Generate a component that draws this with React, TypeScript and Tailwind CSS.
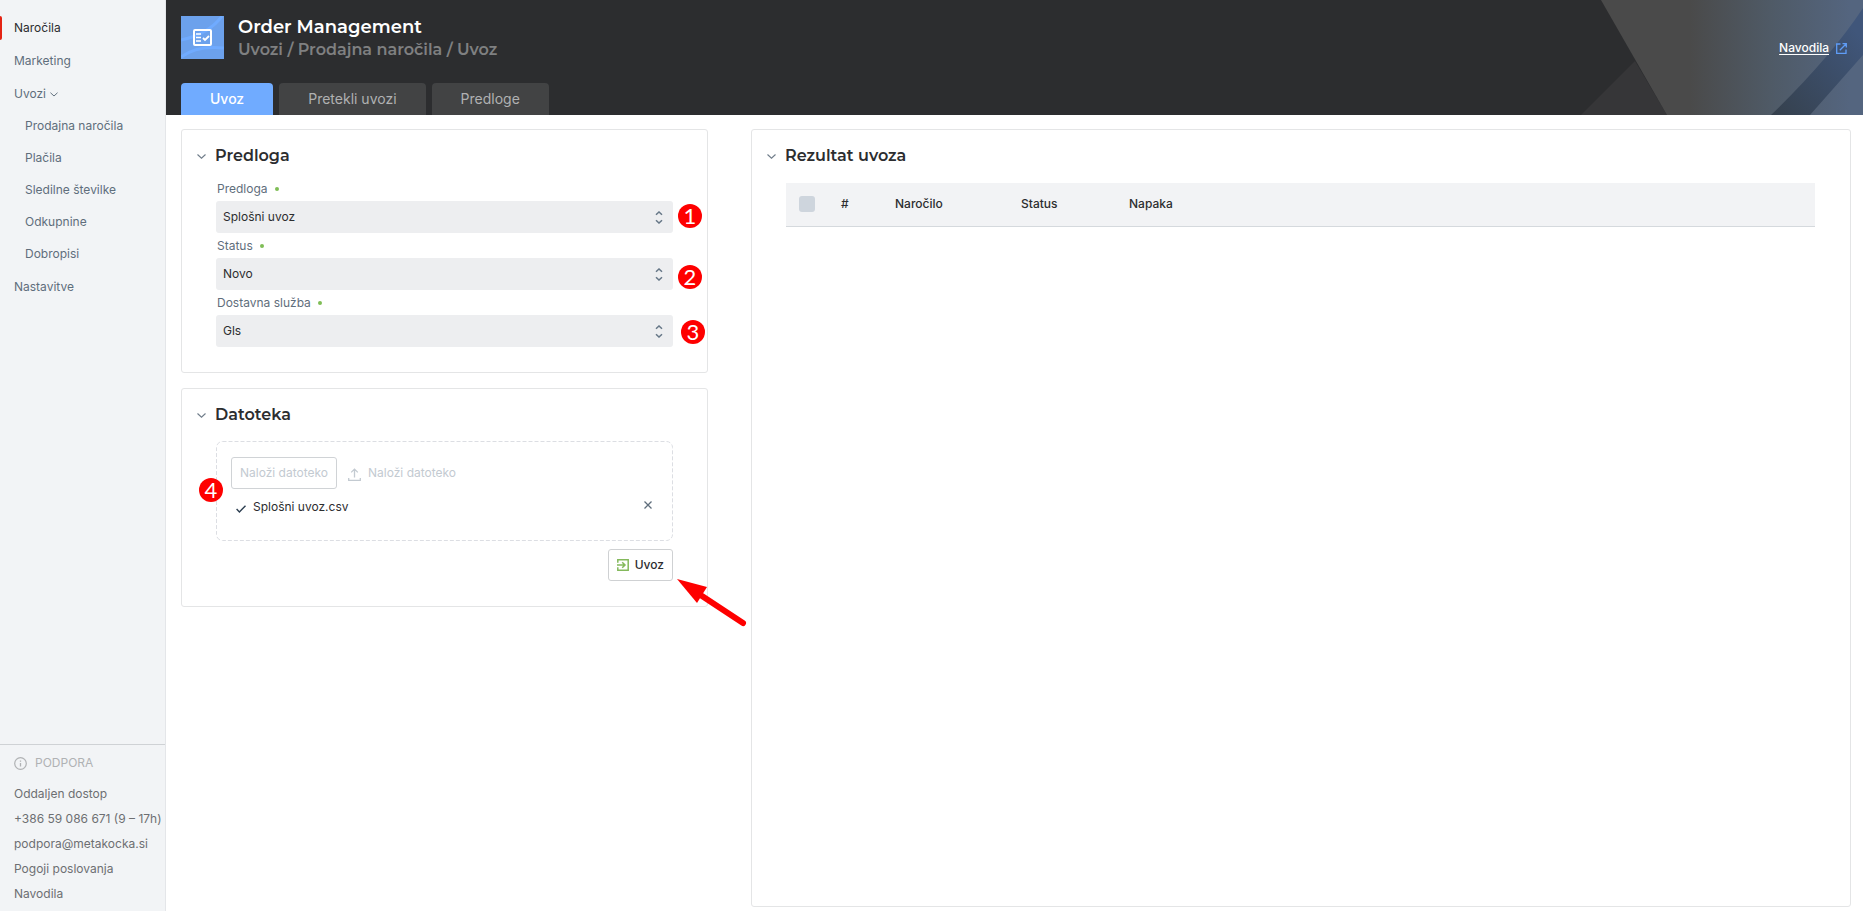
import { useState, type ReactNode } from 'react';

const importLinks = ['Prodajna naročila', 'Plačila', 'Sledilne številke', 'Odkupnine', 'Dobropisi'];

const supportLinks = [
  'Oddaljen dostop',
  '+386 59 086 671 (9 – 17h)',
  'podpora@metakocka.si',
  'Pogoji poslovanja',
  'Navodila',
];

const tabs = ['Uvoz', 'Pretekli uvozi', 'Predloge'];

const headingFont = "font-['Montserrat','Inter',sans-serif]";

function Chevron({ className = '' }: { className?: string }) {
  return (
    <svg viewBox="0 0 9 5" fill="none" stroke="currentColor" className={className}>
      <path d="M0.5 0.5 4.5 4.2 8.5 0.5" strokeWidth="1.1" />
    </svg>
  );
}

function Badge({ value, className }: { value: number; className: string }) {
  return (
    <span
      className={`absolute flex size-6 items-center justify-center rounded-full bg-[#fe0000] font-['Lato',sans-serif] text-[22px] leading-6 text-white ${className}`}
    >
      {value}
    </span>
  );
}

function Sidebar() {
  const [open, setOpen] = useState(true);

  return (
    <aside className="flex w-[166px] shrink-0 flex-col border-r border-[#e4e6e9] bg-[#f2f4f6]">
      <nav className="pt-3">
        <ul className="flex flex-col gap-px text-[#5f6e7c]">
          <li className="relative flex h-8 items-center pl-3.5">
            <span className="absolute top-1 left-0 h-6 w-0.5 rounded-r bg-[#e42313]" />
            <a href="#narocila" className="text-[#2c2d2f]">Naročila</a>
          </li>
          <li className="flex h-8 items-center pl-3.5">
            <a href="#marketing">Marketing</a>
          </li>
          <li>
            <button
              type="button"
              aria-expanded={open}
              onClick={() => setOpen(!open)}
              className="flex h-8 items-center gap-1 pl-3.5"
            >
              Uvozi
              <Chevron className="h-[5px] w-2" />
            </button>
            {open && (
              <ul>
                {importLinks.map((label) => (
                  <li key={label} className="flex h-8 items-center pl-[25px]">
                    <a href="#uvozi">{label}</a>
                  </li>
                ))}
              </ul>
            )}
          </li>
          <li className="flex h-8 items-center pl-3.5">
            <a href="#nastavitve">Nastavitve</a>
          </li>
        </ul>
      </nav>

      {/* Support */}
      <div className="mt-auto border-t border-[#cfd2d5] pb-[5px] pl-3.5 text-[#6d6f72]">
        <div className="flex h-9 items-center gap-2 text-[#b0b2b4]">
          <svg width="13" height="13" viewBox="0 0 13 13" fill="none" stroke="currentColor">
            <circle cx="6.5" cy="6.5" r="5.8" strokeWidth="1.2" />
            <path d="M6.5 6v3.6M6.5 3.4v1.3" strokeWidth="1.3" />
          </svg>
          PODPORA
        </div>
        <ul>
          {supportLinks.map((label) => (
            <li key={label} className="flex h-[25px] items-center whitespace-nowrap">
              <a href="#podpora">{label}</a>
            </li>
          ))}
        </ul>
      </div>
    </aside>
  );
}

function HeaderArt() {
  return (
    <svg width="363" height="115" viewBox="0 0 363 115" className="absolute top-0 right-0" aria-hidden="true">
      <defs>
        <linearGradient id="art-light" x1="190" x2="350" y1="0" y2="0" gradientUnits="userSpaceOnUse">
          <stop offset="0" stopColor="#4a4a4a" />
          <stop offset="0.5" stopColor="#4f5a66" />
          <stop offset="1" stopColor="#54657f" />
        </linearGradient>
        <linearGradient id="art-dark" x1="271" x2="363" y1="115" y2="40" gradientUnits="userSpaceOnUse">
          <stop offset="0" stopColor="#35404c" />
          <stop offset="1" stopColor="#40567a" />
        </linearGradient>
      </defs>
      <path d="M81 115 135 61l32 54z" fill="#363638" />
      <path d="M101 0h262v115H167z" fill="url(#art-light)" />
      <path d="M363 8Q330 58 271 115h39L363 55z" fill="url(#art-dark)" />
    </svg>
  );
}

function Header() {
  const [active, setActive] = useState('Uvoz');

  return (
    <header className="relative flex h-[115px] flex-col justify-between bg-[#2c2d2f] pl-[15px]">
      <HeaderArt />
      <div className="relative flex items-start justify-between pt-4 pr-4">
        <div className="flex gap-3.5">
          <svg width="43" height="43" viewBox="0 0 43 43" fill="none">
            <path d="M0 0h43v43H0z" fill="#6ca1ec" />
            <path d="M0 24Q28 18 41 0" stroke="#70abff" strokeWidth="3" />
            <path d="M0 41Q16 29 43 32" stroke="#70abff" strokeWidth="3" />
            <rect x="13" y="14" width="17" height="15" rx="1" stroke="#fff" strokeWidth="2" />
            <path d="M15 18h5M15 21.5h5M15 25h5" stroke="#fff" strokeWidth="1.4" />
            <path d="m22 22 2 2 4-4" stroke="#fff" strokeWidth="1.8" />
          </svg>
          <div className={headingFont}>
            <h1 className="text-lg leading-[22px] font-semibold text-white">Order Management</h1>
            <p className="text-base leading-6 font-semibold text-[#7f8081]">Uvozi / Prodajna naročila / Uvoz</p>
          </div>
        </div>
        <a href="#navodila" className="mt-6 flex items-center gap-[7px] font-medium text-white">
          <span className="underline underline-offset-2">Navodila</span>
          <svg width="11" height="11" viewBox="0 0 11 11" fill="none" stroke="#5f9df7" strokeWidth="1.3">
            <path d="M4.5 1H.7v9.3H10V6.5M6.5.7h3.8v3.8M10 1 3.8 7.2" />
          </svg>
        </a>
      </div>
      <div role="tablist" className="relative flex gap-1.5">
        {tabs.map((tab) => (
          <button
            key={tab}
            type="button"
            role="tab"
            aria-selected={active === tab}
            onClick={() => setActive(tab)}
            className={`h-8 rounded-t px-[29px] text-sm ${
              active === tab ? 'bg-[#70abff] font-medium text-white' : 'bg-[#424344] text-[#b0b1b2]'
            }`}
          >
            {tab}
          </button>
        ))}
      </div>
    </header>
  );
}

function Panel({ title, className = '', children }: { title: string; className?: string; children: ReactNode }) {
  return (
    <section className={`rounded-[3px] border border-[#e4e5e6] px-[34px] ${className}`}>
      <h2 className={`-ml-5 flex h-[52px] items-center gap-[9px] text-base font-semibold text-[#2c2d2f] ${headingFont}`}>
        <Chevron className="ml-px h-[5px] w-[9px] text-[#6f7c89]" />
        {title}
      </h2>
      {children}
    </section>
  );
}

function SelectField({ id, label, value, badge, badgeClass }: {
  id: string;
  label: string;
  value: string;
  badge: number;
  badgeClass: string;
}) {
  return (
    <div>
      <label htmlFor={id} className="flex h-[25px] items-center gap-[7px] pl-px text-[#5f6e7c]">
        {label}
        <span className="size-1 rounded-full bg-[#7fbd56]" />
      </label>
      <div className="relative">
        <select
          id={id}
          defaultValue={value}
          className="block h-8 w-full appearance-none rounded-[3px] bg-[#edeef0] px-[7px] text-[#2c2d2f]"
        >
          <option>{value}</option>
        </select>
        <svg
          width="8"
          height="13"
          viewBox="0 0 8 13"
          fill="none"
          stroke="#667787"
          strokeWidth="1.5"
          className="pointer-events-none absolute top-2.5 right-2.5"
        >
          <path d="M1 3.8 4 1l3 2.8M1 9.2 4 12l3-2.8" />
        </svg>
        <Badge value={badge} className={badgeClass} />
      </div>
    </div>
  );
}

function UploadBox() {
  return (
    <div className="relative h-[100px]">
      <svg width="100%" height="100" className="absolute inset-0" fill="none" aria-hidden="true">
        <rect x="0.5" y="0.5" width="100%" height="99" rx="6" className="w-[calc(100%-1px)]" stroke="#dcdee3" strokeDasharray="4 2" />
      </svg>
      <div className="relative px-[15px] pt-4">
        <div className="flex items-center text-[#c3cad1]">
          <button type="button" disabled className="h-8 rounded-[3px] border border-[#d0d3d6] px-2">
            Naloži datoteko
          </button>
          <svg width="13" height="13" viewBox="0 0 13 13" fill="none" stroke="currentColor" strokeWidth="1.3" className="mt-0.5 ml-[11px]">
            <path d="M.7 10v2.3h11.6V10M6.5 9.5V1.2M3.2 4.4l3.3-3.3 3.3 3.3" />
          </svg>
          <span className="ml-[7px]">Naloži datoteko</span>
        </div>
        <div className="mt-2.5 flex items-center pr-1 pl-[5px]">
          <svg width="10" height="8" viewBox="0 0 10 8" fill="none" stroke="#2c3e50" strokeWidth="1.4" className="mt-1">
            <path d="m.6 4 2.8 2.9L9.5.7" />
          </svg>
          <span className="ml-[7px] text-[#2c2d2f]">Splošni uvoz.csv</span>
          <button type="button" aria-label="Odstrani" className="mr-0.5 mb-1 ml-auto">
            <svg width="8" height="8" viewBox="0 0 8 8" stroke="#5f6e7c" strokeWidth="1.3">
              <path d="m.5.5 7 7M7.5.5l-7 7" />
            </svg>
          </button>
        </div>
      </div>
      <Badge value={4} className="top-[37px] -left-[17px]" />
    </div>
  );
}

export default function App() {
  return (
    <div className="flex min-h-screen bg-white font-['Inter',sans-serif] text-xs">
      <Sidebar />
      <div className="flex min-w-0 flex-1 flex-col">
        <Header />
        <main className="grid flex-1 grid-cols-[minmax(0,527fr)_minmax(0,1100fr)] gap-[43px] px-[15px] pt-3.5 pr-3 pb-1">
          <div className="flex flex-col gap-[15px]">
            <Panel title="Predloga" className="pb-[25px]">
              <div className="-mt-1.5">
                <SelectField id="predloga" label="Predloga" value="Splošni uvoz" badge={1} badgeClass="top-[3px] -right-[29px]" />
                <SelectField id="status" label="Status" value="Novo" badge={2} badgeClass="top-[7px] -right-[29px]" />
                <SelectField id="dostava" label="Dostavna služba" value="Gls" badge={3} badgeClass="top-[5px] -right-8" />
              </div>
            </Panel>
            <Panel title="Datoteka" className="pb-[25px]">
              <UploadBox />
              <div className="mt-2 flex justify-end">
                <div className="relative">
                  <button
                    type="button"
                    className="flex h-8 items-center gap-1.5 rounded-[3px] border border-[#cfd1d3] px-2 font-medium text-[#2c2d2f]"
                  >
                    <svg width="12" height="12" viewBox="0 0 12 12" fill="none" stroke="#84b95c" strokeWidth="1.5">
                      <path d="M.8 3.8V.8h10.4v10.4H.8v-3M0 6h7.6M5.2 3.2 8 6 5.2 8.8" />
                    </svg>
                    Uvoz
                  </button>
                  <svg width="70" height="48" viewBox="0 0 70 48" className="absolute top-[30px] left-[69px]" aria-hidden="true">
                    <path d="M25 17 66 44" stroke="#fe0000" strokeWidth="6" strokeLinecap="round" />
                    <path d="M0 0 30 8 20 24z" fill="#fe0000" />
                  </svg>
                </div>
              </div>
            </Panel>
          </div>

          <Panel title="Rezultat uvoza" className="pr-[35px]">
            <table className="mt-px w-full table-fixed text-left">
              <thead>
                <tr className="h-[43px] border-b border-[#d5d9dd] bg-[#f2f3f5] text-[#2c2d2f]">
                  <th className="w-[55px] pl-[13px]">
                    <input
                      type="checkbox"
                      aria-label="Izberi vse"
                      className="block size-4 appearance-none rounded-[3px] bg-[#ced5dd] checked:bg-[#70abff]"
                    />
                  </th>
                  <th className="w-[54px] font-medium">#</th>
                  <th className="w-[126px] font-medium">Naročilo</th>
                  <th className="w-[108px] font-medium">Status</th>
                  <th className="font-medium">Napaka</th>
                </tr>
              </thead>
            </table>
          </Panel>
        </main>
      </div>
    </div>
  );
}
